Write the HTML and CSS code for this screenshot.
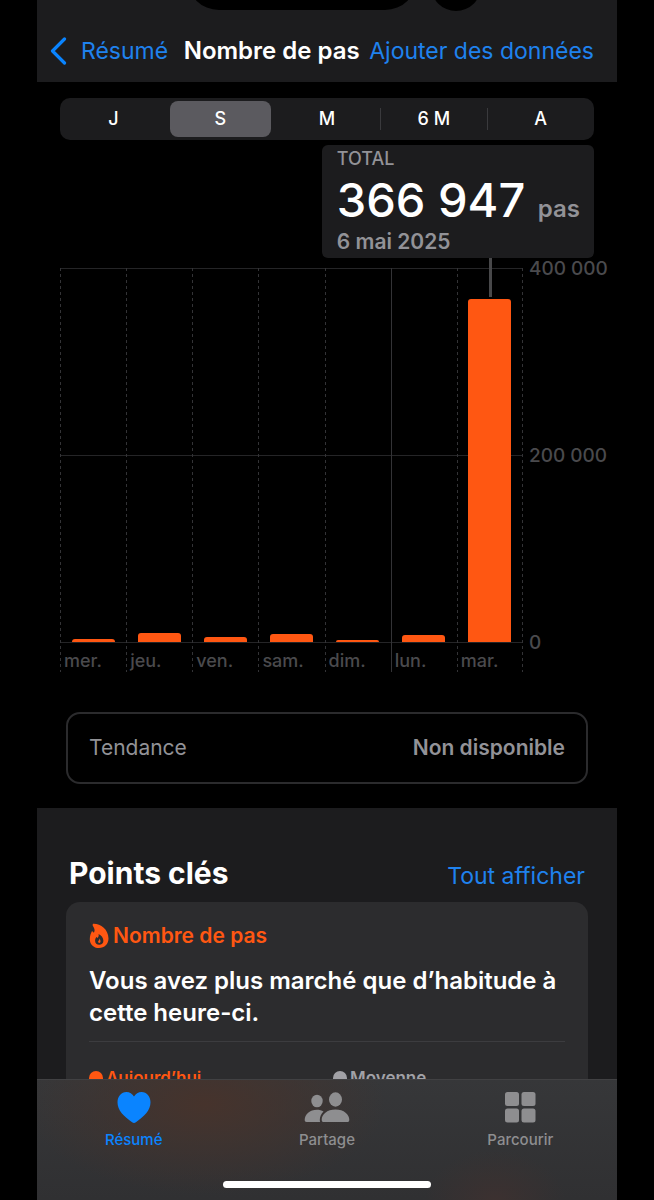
FILE: index.html
```html
<!DOCTYPE html>
<html lang="fr">
<head>
  <meta charset="UTF-8" />
  <meta name="viewport" content="width=device-width, initial-scale=1.0"/>
  <title>Nombre de pas</title>
  <link rel="stylesheet" href="styles.css">
</head>
<body>
  <div class="phone">
    <header class="navbar">
      <div class="island"></div>
      <div class="island-dot"></div>
      <a class="back" href="#resume">
        <svg width="18" height="28" viewBox="0 0 18 28" aria-hidden="true">
          <path d="M14.500 2 2.500 14l12 12" fill="none" stroke="currentColor" stroke-width="3.200" stroke-linecap="round" stroke-linejoin="round"/>
        </svg>
        <span>Résumé</span>
      </a>
      <h1>Nombre de pas</h1>
      <a class="add" href="#ajouter">Ajouter des données</a>
    </header>

    <main>
      <div class="periods" role="radiogroup" aria-label="Période">
        <label><input type="radio" name="period"><span>J</span></label>
        <label><input type="radio" name="period" checked><span>S</span></label>
        <label><input type="radio" name="period"><span>M</span></label>
        <label><input type="radio" name="period"><span>6 M</span></label>
        <label><input type="radio" name="period"><span>A</span></label>
      </div>

      <section class="total">
        <div class="total-label">TOTAL</div>
        <div class="total-value">366 947 <small>pas</small></div>
        <div class="total-date">6 mai 2025</div>
      </section>

      <section class="chart">
        <div class="plot">
          <div class="day"><div class="track"><div class="bar" style="height: 0.8%"></div></div><span>mer.</span></div>
          <div class="day"><div class="track"><div class="bar" style="height: 2.5%"></div></div><span>jeu.</span></div>
          <div class="day"><div class="track"><div class="bar" style="height: 1.3%"></div></div><span>ven.</span></div>
          <div class="day"><div class="track"><div class="bar" style="height: 2.1%"></div></div><span>sam.</span></div>
          <div class="day"><div class="track"><div class="bar" style="height: 0.5%"></div></div><span>dim.</span></div>
          <div class="day week-start"><div class="track"><div class="bar" style="height: 1.8%"></div></div><span>lun.</span></div>
          <div class="day"><div class="track"><div class="bar selected" style="height: 91.7%"></div></div><span>mar.</span></div>
        </div>
        <div class="axis">
          <span>400 000</span>
          <span>200 000</span>
          <span>0</span>
        </div>
      </section>

      <section class="trend">
        <span>Tendance</span>
        <strong>Non disponible</strong>
      </section>

      <section class="highlights">
        <div class="highlights-head">
          <h2>Points clés</h2>
          <a href="#tout">Tout afficher</a>
        </div>
        <article class="card">
          <h3>
            <svg width="20" height="26" viewBox="0 0 20 26" aria-hidden="true">
              <path fill="currentColor" fill-rule="evenodd" d="M4 .8C11 .3 19.500 6 19.500 15.600c0 5.600-3.900 9.400-9.500 9.400C4.500 25 .8 21.300.8 16.200c0-3.500 1.200-6.200 2.200-8.200l1.900 1.700c.9-1.600.8-3.200.2-4.500C4.600 3.800 2.800 2.400 4 .8ZM9.500 11c.6 1.900 0 2.800-.9 3.900l-1.200-.8c-.9 1.300-1.300 2.400-1.300 3.700 0 2.400 1.700 4 4.100 4s4.200-1.600 4.200-4c0-3-1.900-5.600-4.900-6.800Z"/>
              <path fill="currentColor" d="M10.300 15.500c.3 1-.1 1.500-.6 2.100-.4.500-.6.800-.6 1.200 0 .7.500 1.100 1.200 1.100s1.200-.5 1.200-1.300c0-1.200-.4-2.400-1.200-3.100Z"/>
            </svg>
            Nombre de pas
          </h3>
          <p>Vous avez plus marché que d’habitude à cette heure-ci.</p>
          <div class="compare">
            <div class="today">Aujourd’hui</div>
            <div class="average">Moyenne</div>
          </div>
        </article>
      </section>
    </main>

    <footer>
      <nav class="tabs">
        <a class="active" href="#resume">
          <svg width="46" height="34" viewBox="0 0 46 34" aria-hidden="true">
            <path fill="currentColor" d="M23 33c-.7 0-1.300-.3-1.900-.7C13 26.500 6.500 20.500 6.500 12.300 6.500 6.300 10.300 2 15.400 2c3.300 0 6 1.800 7.600 4.600C24.600 3.800 27.300 2 30.600 2c5.100 0 8.900 4.300 8.900 10.300 0 8.200-6.500 14.200-14.600 20-.6.4-1.200.7-1.900.7Z"/>
          </svg>
          <span>Résumé</span>
        </a>
        <a href="#partage">
          <svg width="46" height="34" viewBox="0 0 46 34" aria-hidden="true">
            <g fill="currentColor">
              <ellipse cx="13" cy="11" rx="5.700" ry="6.300"/>
              <path d="M.7 30C.7 24 6 19.700 12.800 19.700c2.600 0 4.800.6 6.700 1.700-2.200 2.100-3.700 5.200-3.700 8.500 0 .8.100 1.300.3 2.100H2.600C1.300 32 .7 31.300.7 30Z"/>
              <ellipse cx="31.500" cy="9.500" rx="6.500" ry="7.200"/>
              <path d="M17.700 29.700C17.700 24.500 23 19.500 31.500 19.500s13.800 5 13.800 10.200c0 1.600-.7 2.300-2.200 2.300H19.900c-1.500 0-2.200-.7-2.200-2.300Z"/>
            </g>
          </svg>
          <span>Partage</span>
        </a>
        <a href="#parcourir">
          <svg width="46" height="34" viewBox="0 0 46 34" aria-hidden="true">
            <g fill="currentColor">
              <rect x="8" y="2" width="14" height="14" rx="2.500"/>
              <rect x="24.500" y="2" width="14" height="14" rx="2.500"/>
              <rect x="8" y="18.500" width="14" height="14" rx="2.500"/>
              <rect x="24.500" y="18.500" width="14" height="14" rx="2.500"/>
            </g>
          </svg>
          <span>Parcourir</span>
        </a>
      </nav>
      <div class="home-indicator"></div>
    </footer>
  </div>
</body>
</html>
```

FILE: styles.css
```css
:root {
  --blue: #1f82ee;
  --orange: #ff5712;
  --panel: #1c1c1e;
  --card: #2c2c2e;
  --gray: #929297;
  --dim: #4a4a4d;
  --line: #252527;
}

* {
  box-sizing: border-box;
}

body {
  margin: 0;
  background: #000;
  color: #fff;
  font-family: Inter, "Liberation Sans", sans-serif;
}

h1, h2, h3, p {
  margin: 0;
}

a {
  color: var(--blue);
  text-decoration: none;
}

.phone {
  display: flex;
  flex-direction: column;
  height: 100vh;
  margin: 0 37px;
}

/* barre de navigation */
.navbar {
  position: relative;
  display: flex;
  align-items: center;
  justify-content: space-between;
  padding: 36px 23px 16px 13px;
  background: var(--panel);
  font-size: 23px;
  line-height: 30px;
  white-space: nowrap;
  overflow: hidden;
}

.navbar h1 {
  font-size: 24px;
  font-weight: 600;
}

.back {
  display: flex;
  align-items: center;
  gap: 13px;
  margin-right: 6px;
}

.back svg {
  color: #0a84ff;
}

.island,
.island-dot {
  position: absolute;
  background: #000;
}

.island {
  top: -54px;
  left: 150px;
  width: 230px;
  height: 64px;
  border-radius: 32px;
}

.island-dot {
  top: -39px;
  left: 394px;
  width: 50px;
  height: 50px;
  border-radius: 50%;
}

main {
  flex: 1;
  display: flex;
  flex-direction: column;
  min-height: 0;
  overflow-y: auto;
  scrollbar-width: none;
}

main > * {
  flex-shrink: 0;
}

/* sélecteur de période */
.periods {
  display: flex;
  height: 42px;
  margin: 16px 23px 0;
  border-radius: 10px;
  background: var(--panel);
}

.periods label {
  position: relative;
  flex: 1;
  padding: 3px;
  cursor: pointer;
}

.periods input {
  position: absolute;
  opacity: 0;
}

.periods span {
  display: block;
  border-radius: 8px;
  font-size: 18px;
  font-weight: 500;
  line-height: 36px;
  text-align: center;
}

.periods input:checked + span {
  background: #5b5a5f;
}

.periods label:nth-child(n+4) {
  background: linear-gradient(#3a3a3d, #3a3a3d) left center / 1px 22px no-repeat;
}

/* total */
.total {
  align-self: flex-end;
  margin: 5px 23px 0 0;
  padding: 3px 14px 4px 15px;
  border-radius: 6px;
  background: var(--panel);
  color: var(--gray);
  font-weight: 600;
}

.total-label {
  font-size: 18px;
  font-weight: 500;
  line-height: 22px;
}

.total-value {
  color: #fff;
  font-size: 47px;
  font-weight: 500;
  line-height: 60px;
}

.total-value small {
  color: var(--gray);
  font-size: 24px;
  font-weight: 600;
  line-height: 24px;
}

.total-date {
  font-size: 21px;
  line-height: 24px;
}

/* graphique */
.chart {
  display: flex;
  margin: 10px 0 0 23px;
  color: var(--dim);
  font-size: 18px;
  font-weight: 500;
}

.plot {
  flex: 1;
  display: grid;
  grid-template-columns: repeat(7, 1fr);
  background:
    linear-gradient(var(--line), var(--line)) 0 0 / 100% 1px no-repeat,
    linear-gradient(var(--line), var(--line)) 0 187px / 100% 1px no-repeat,
    linear-gradient(var(--line), var(--line)) 0 374px / 100% 1px no-repeat;
}

.day {
  background: repeating-linear-gradient(#333336 0 3px, transparent 3px 6px) left top / 1px 100% no-repeat;
}

.day:last-child {
  background:
    repeating-linear-gradient(#333336 0 3px, transparent 3px 6px) left top / 1px 100% no-repeat,
    repeating-linear-gradient(#333336 0 3px, transparent 3px 6px) right top / 1px 100% no-repeat;
}

.day.week-start {
  background: linear-gradient(#333336, #333336) left top / 1px 100% no-repeat;
}

.track {
  display: flex;
  align-items: flex-end;
  justify-content: center;
  height: 374px;
}

.bar {
  position: relative;
  width: 65%;
  border-radius: 3px 3px 0 0;
  background: var(--orange);
}

.bar.selected::before {
  content: "";
  position: absolute;
  bottom: calc(100% + 2px);
  left: calc(50% - 1px);
  width: 3px;
  height: 39px;
  background: #48484a;
}

.day span {
  display: block;
  padding: 8px 0 0 4px;
  line-height: 22px;
}

.axis {
  display: flex;
  flex-direction: column;
  justify-content: space-between;
  width: 94px;
  height: 398px;
  margin-top: -11px;
  padding-left: 6px;
  font-size: 19px;
  line-height: 24px;
}

/* tendance */
.trend {
  display: flex;
  justify-content: space-between;
  margin: 40px 29px 24px;
  padding: 20px 21px;
  border: 2px solid #2b2b2d;
  border-radius: 14px;
  color: var(--gray);
  font-size: 21px;
  line-height: 28px;
}

.trend strong {
  font-weight: 600;
}

/* points clés */
.highlights {
  padding: 45px 29px 24px;
  background: var(--panel);
}

.highlights-head {
  display: flex;
  align-items: baseline;
  justify-content: space-between;
  margin-bottom: 6px;
  padding: 0 3px;
  font-size: 23px;
  line-height: 40px;
}

.highlights-head h2 {
  font-size: 30px;
  font-weight: 700;
}

.card {
  padding: 19px 23px 24px;
  border-radius: 14px;
  background: var(--card);
}

.card h3 {
  display: flex;
  align-items: center;
  gap: 4px;
  color: var(--orange);
  font-size: 21px;
  font-weight: 600;
  line-height: 30px;
}

.card p {
  margin-top: 14px;
  padding-bottom: 12px;
  border-bottom: 1px solid #3c3c3f;
  font-size: 24px;
  font-weight: 600;
  line-height: 32px;
}

.compare {
  display: grid;
  grid-template-columns: 1fr 1fr;
  gap: 12px;
  padding-top: 24px;
  font-size: 17px;
  font-weight: 600;
  line-height: 24px;
}

.compare div {
  display: flex;
  align-items: center;
  gap: 3px;
}

.compare div::before {
  content: "";
  width: 14px;
  height: 14px;
  border-radius: 50%;
  background: currentColor;
}

.today {
  color: var(--orange);
}

.average {
  color: #a1a1a6;
}

/* barre d'onglets */
footer {
  padding: 10px 0 12px;
  border-top: 1px solid #414143;
  background:
    radial-gradient(ellipse 180px 90px at 29% 20%, #46332c, transparent),
    radial-gradient(ellipse 70px 50px at 79% 100%, #3c3130, transparent),
    linear-gradient(#363739, #303032);
}

.tabs {
  display: grid;
  grid-template-columns: repeat(3, 1fr);
}

.tabs a {
  display: flex;
  flex-direction: column;
  align-items: center;
  gap: 6px;
  color: #8e8e90;
  font-size: 15px;
  font-weight: 500;
  line-height: 20px;
}

.tabs a.active {
  color: #0a84ff;
}

.home-indicator {
  width: 36%;
  height: 7px;
  margin: 31px auto 0;
  border-radius: 4px;
  background: #fff;
}
```
